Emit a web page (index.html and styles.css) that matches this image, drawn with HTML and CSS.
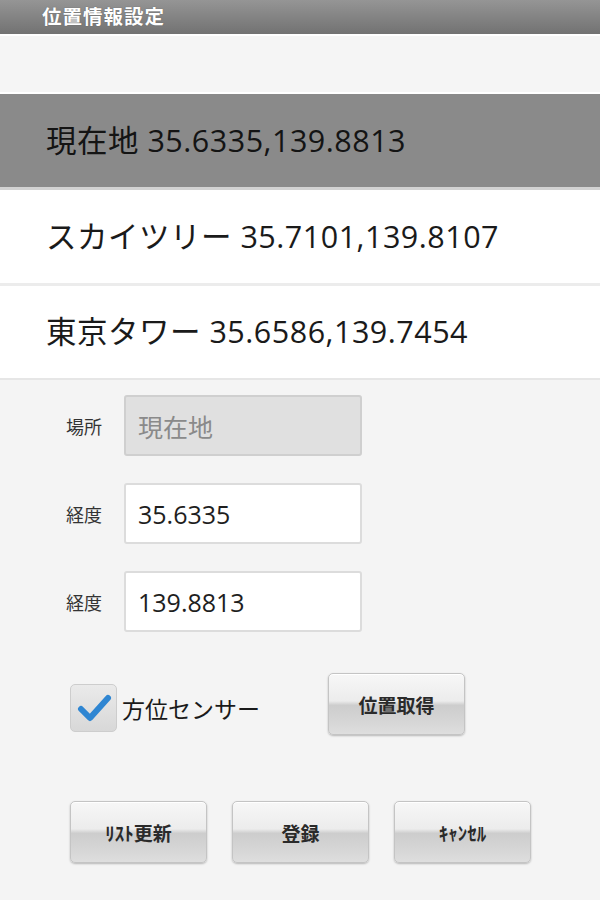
FILE: index.html
```html
<!DOCTYPE html>
<html lang="ja">
<head>
<meta charset="utf-8">
<title>位置情報設定</title>
<link rel="stylesheet" href="styles.css">
</head>
<body>
<div class="screen">
  <header class="titlebar"><span class="title">位置情報設定</span></header>
  <div class="spacer"></div>
  <ul class="list">
    <li class="item selected">現在地 35.6335,139.8813</li>
    <li class="item">スカイツリー 35.7101,139.8107</li>
    <li class="item last">東京タワー 35.6586,139.7454</li>
  </ul>
  <div class="form">
    <div class="field">
      <span class="label">場所</span>
      <div class="input disabled">現在地</div>
    </div>
    <div class="field">
      <span class="label">経度</span>
      <div class="input">35.6335</div>
    </div>
    <div class="field">
      <span class="label">経度</span>
      <div class="input">139.8813</div>
    </div>
    <div class="sensor-row">
      <div class="check">
        <div class="checkbox">
          <svg width="36" height="36" viewBox="0 0 36 36"><path d="M5 19 L14 28 L32 8" fill="none" stroke="#2f86d2" stroke-width="6" stroke-linecap="round" stroke-linejoin="round"/></svg>
        </div>
        <span class="check-label">方位センサー</span>
      </div>
      <button class="btn get">位置取得</button>
    </div>
    <div class="actions">
      <button class="btn">ﾘｽﾄ更新</button>
      <button class="btn">登録</button>
      <button class="btn">ｷｬﾝｾﾙ</button>
    </div>
  </div>
</div>
</body>
</html>
```
FILE: styles.css
```css
* { box-sizing: border-box; }
html, body {
  margin: 0;
  padding: 0;
  background: #f4f4f4;
}
body {
  font-family: "Noto Sans CJK JP", "Noto Sans", sans-serif;
}
.screen {
  width: 600px;
  height: 900px;
  overflow: hidden;
  display: flex;
  flex-direction: column;
  background: #f4f4f4;
}
.titlebar {
  height: 36px;
  background: linear-gradient(#959595, #727272);
  border-bottom: 2px solid #ffffff;
  display: flex;
  align-items: center;
  padding-left: 42px;
}
.title {
  color: #fff;
  font-weight: bold;
  font-size: 19.5px;
  letter-spacing: 1px;
  line-height: 1;
  margin-top: -2px;
  text-shadow: 0 0 1px #555;
}
.spacer {
  height: 58px;
  background: #f5f5f5;
  border-bottom: 2px solid #ffffff;
}
.list {
  list-style: none;
  margin: 0;
  padding: 0;
}
.item {
  height: 96px;
  display: flex;
  align-items: center;
  padding-left: 46px;
  padding-bottom: 4px;
  font-family: "Open Sans", "Noto Sans CJK JP", sans-serif;
  font-size: 30.5px;
  letter-spacing: 0.5px;
  color: #1a1a1a;
  background: #ffffff;
  border-bottom: 3px solid #ececec;
}
.item.selected {
  height: 96px;
  background: #8a8a8a;
  color: #141414;
  border-bottom: 3px solid #d2d2d2;
}
.item.last {
  height: 94px;
  border-bottom: 2px solid #e6e6e6;
}
.form {
  padding-top: 15px;
  display: flex;
  flex-direction: column;
}
.field {
  display: flex;
  align-items: center;
  margin-left: 66px;
  margin-bottom: 27px;
}
.label {
  width: 58px;
  font-size: 18px;
  color: #333;
}
.input {
  width: 238px;
  height: 61px;
  border: 2px solid #dcdcdc;
  border-radius: 3px;
  background: #fff;
  display: flex;
  align-items: center;
  padding-left: 12px;
  font-family: "Open Sans", "Noto Sans CJK JP", sans-serif;
  font-size: 25px;
  color: #1e1e1e;
}
.input.disabled {
  background: #e0e0e0;
  border-color: #cfcfcf;
  color: #8a8a8a;
}
.sensor-row {
  display: flex;
  align-items: center;
  margin-left: 70px;
  margin-top: 14px;
}
.check {
  display: flex;
  align-items: center;
  margin-top: 8px;
}
.checkbox {
  width: 47px;
  height: 48px;
  border-radius: 5px;
  background: linear-gradient(#eaeaea, #d8d8d8);
  border: 1px solid #cdcdcd;
  display: flex;
  align-items: center;
  justify-content: center;
}
.check-label {
  font-size: 23px;
  color: #1a1a1a;
  margin-left: 5px;
}
.btn {
  width: 137px;
  height: 62px;
  border: 1px solid #c4c4c4;
  border-radius: 5px;
  background: linear-gradient(#f7f7f7 0%, #ececec 45%, #cdcdcd 52%, #d6d6d6 80%, #dedede 100%);
  box-shadow: 0 1px 2px rgba(0,0,0,0.25), inset 0 1px 0 #fff;
  font-family: "Noto Sans CJK JP", "Noto Sans", sans-serif;
  font-weight: bold;
  font-size: 19px;
  color: #2a2a2a;
  padding: 0;
}
.btn.get {
  margin-left: 68px;
}
.actions {
  display: flex;
  gap: 25px;
  margin-left: 70px;
  margin-top: 66px;
}
```
